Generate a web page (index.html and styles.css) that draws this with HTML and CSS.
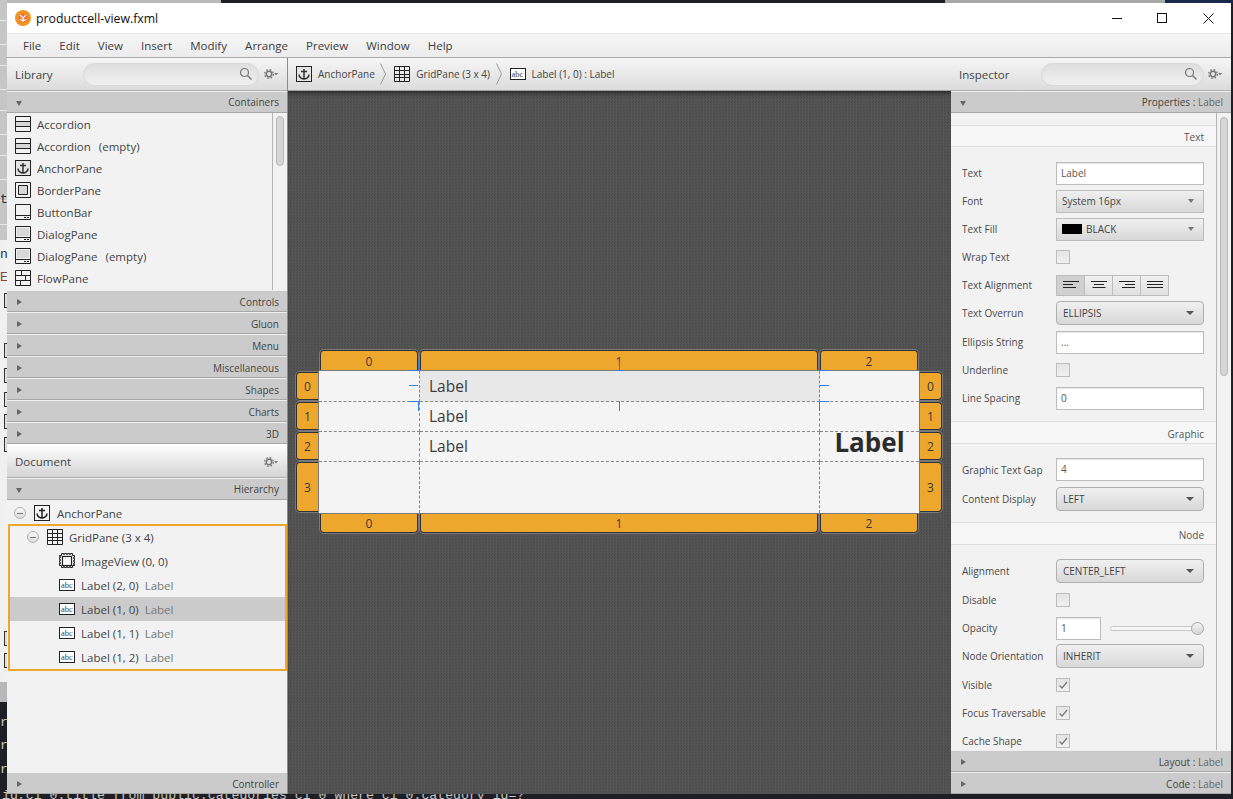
FILE: index.html
```html
<!DOCTYPE html>
<html lang="en">
<head>
<meta charset="utf-8">
<title>productcell-view.fxml</title>
<link rel="stylesheet" href="styles.css">
</head>
<body>
<svg class="sprite" aria-hidden="true">
  <defs>
    <symbol id="i-accordion" viewBox="0 0 16 16"><rect x=".5" y="5" width="15" height="6" fill="#d8d8d8"/><path d="M.5.5h15v15H.5zM.5 5.5h15M.5 10.5h15" fill="none" stroke="#222"/></symbol>
    <symbol id="i-anchor" viewBox="0 0 16 16"><rect x=".5" y=".5" width="15" height="15" fill="#e4e4e4" stroke="#222"/><path d="M8 3v10M5 5.5h6M3 8.5c0 3 3 4.500 5 4.500s5-1.500 5-4.500" fill="none" stroke="#333" stroke-width="1.500"/></symbol>
    <symbol id="i-anchor-w" viewBox="0 0 16 16"><rect x=".5" y=".5" width="15" height="15" fill="#f4f4f4" stroke="#222"/><path d="M8 3v10M5 5.500h6M3 8.500c0 3 3 4.500 5 4.500s5-1.500 5-4.500" fill="none" stroke="#222" stroke-width="1.500"/></symbol>
    <symbol id="i-border" viewBox="0 0 16 16"><rect x="4" y="4" width="8" height="8" fill="#d8d8d8"/><path d="M.5.5h15v15H.5zM3.500 3.500h9v9h-9z" fill="none" stroke="#222"/></symbol>
    <symbol id="i-bar" viewBox="0 0 16 16"><path d="M.5.5h15v15H.5zM.5 11.500h15" fill="none" stroke="#222"/><path d="M9 13.500h2M12 13.500h2" stroke="#222"/></symbol>
    <symbol id="i-dialog" viewBox="0 0 16 16"><rect x="2" y="2" width="12" height="8" fill="#d8d8d8"/><path d="M.5.5h15v15H.5zM.5 11.500h15" fill="none" stroke="#222"/><path d="M9 13.500h2M12 13.500h2" stroke="#222"/></symbol>
    <symbol id="i-flow" viewBox="0 0 16 16"><path d="M.5.5h15v15H.5zM.5 5.500h15M.5 10.500h15M6.500.5v5M10.500 5.500v5M5.500 10.500v5" fill="none" stroke="#222"/></symbol>
    <symbol id="i-grid" viewBox="0 0 16 16"><path d="M.5.5h15v15H.5zM.5 4.500h15M.5 8.500h15M.5 11.500h15M5.500.5v15M10.500.5v15" fill="none" stroke="#222"/></symbol>
    <symbol id="i-image" viewBox="0 0 16 16"><rect x="3.500" y="3.500" width="9" height="9" fill="#fff" stroke="#222" stroke-width="1.200"/><path d="M.5 2.500h2v-2h2v1h1v-1h2v1h1v-1h2v1h1v-1h2v2h2v2h-1v1h1v2h-1v1h1v2h-1v1h1v1h-2v2h-2v-1h-1v1h-2v-1h-1v1h-2v-1h-1v1h-2v-2h-2v-2h1v-1h-1v-2h1v-1h-1v-2h1v-1h-1z" fill="none" stroke="#222"/></symbol>
    <symbol id="i-search" viewBox="0 0 14 14"><circle cx="5.500" cy="5.500" r="4" fill="none" stroke="#777" stroke-width="1.200"/><path d="M8.500 8.500l4 4" stroke="#777" stroke-width="1.400"/></symbol>
    <symbol id="i-gear" viewBox="0 0 14 10"><circle cx="5" cy="5" r="2.700" fill="none" stroke="#777" stroke-width="1.500"/><circle cx="5" cy="5" r="4.300" fill="none" stroke="#777" stroke-width="1.300" stroke-dasharray="1.700 1.700"/><path d="M10 4h4l-2 2.500z" fill="#777"/></symbol>
    <symbol id="i-check" viewBox="0 0 14 14"><path d="M3.500 7.500l2.500 2.500 5-6" fill="none" stroke="#777" stroke-width="1.200"/></symbol>
    <symbol id="i-left" viewBox="0 0 16 8"><path d="M0 .5h16M0 3.500h10M0 6.500h13" stroke="#222" fill="none"/></symbol>
    <symbol id="i-center" viewBox="0 0 16 8"><path d="M0 .5h16M3 3.500h10M1.500 6.500h13" stroke="#222" fill="none"/></symbol>
    <symbol id="i-right" viewBox="0 0 16 8"><path d="M0 .5h16M6 3.500h10M3 6.500h13" stroke="#222" fill="none"/></symbol>
    <symbol id="i-just" viewBox="0 0 16 8"><path d="M0 .5h16M0 3.500h16M0 6.500h16" stroke="#222" fill="none"/></symbol>
  </defs>
</svg>

<div class="backdrop" aria-hidden="true">
  <div class="bd bd-top1"></div><div class="bd bd-top2"></div><div class="bd bd-top3"></div>
  <div class="bd bd-left1"></div><div class="bd bd-left2"></div><div class="bd bd-left3"></div>
  <i class="bd frag f1"></i><i class="bd frag f2"></i><i class="bd frag f3"></i><i class="bd frag f4"></i>
  <i class="bd frag f5"></i><i class="bd frag f6"></i><i class="bd frag f7"></i><i class="bd frag f8"></i>
  <span class="bd bd-g1">t</span><span class="bd bd-g2">n</span><span class="bd bd-g3">E</span>
  <span class="bd bd-r1">r</span><span class="bd bd-r2">r</span><span class="bd bd-r3">r</span>
  <div class="bd bd-sql">id,ci_0.title from public.categories ci_0 where ci_0.category_id=?</div>
</div>

<div class="window">
  <header class="titlebar">
    <svg class="logo" viewBox="0 0 16 16"><circle cx="8" cy="8" r="8" fill="#f0961e"/><circle cx="8" cy="8" r="4.500" fill="#ef6a3a"/><path d="M5 5l3 3 3-3M8 8v4M5 9a3.500 3.500 0 0 0 6 0" fill="none" stroke="#fff" stroke-width="1.200"/></svg>
    <span class="doc-title">productcell-view.fxml</span>
    <div class="win-controls">
      <span class="wc wc-min"></span>
      <span class="wc wc-max"></span>
      <svg class="wc-close" viewBox="0 0 11 11"><path d="M.5.5l10 10M10.500.5l-10 10" stroke="#111" fill="none"/></svg>
    </div>
  </header>
  <nav class="menubar">
    <span>File</span><span>Edit</span><span>View</span><span>Insert</span><span>Modify</span><span>Arrange</span><span>Preview</span><span>Window</span><span>Help</span>
  </nav>
  <div class="main">
    <aside class="left">
      <div class="panel-head">
        <span class="panel-name">Library</span>
        <div class="pill pill-lib"><svg class="ic-search"><use href="#i-search"/></svg></div>
        <svg class="ic-gear"><use href="#i-gear"/></svg>
      </div>
      <div class="bar open"><i class="tri"></i><span>Containers</span></div>
      <div class="lib-list">
        <ul class="lib-items">
          <li><svg class="ic"><use href="#i-accordion"/></svg>Accordion</li>
          <li><svg class="ic"><use href="#i-accordion"/></svg>Accordion&nbsp; (empty)</li>
          <li><svg class="ic"><use href="#i-anchor"/></svg>AnchorPane</li>
          <li><svg class="ic"><use href="#i-border"/></svg>BorderPane</li>
          <li><svg class="ic"><use href="#i-bar"/></svg>ButtonBar</li>
          <li><svg class="ic"><use href="#i-dialog"/></svg>DialogPane</li>
          <li><svg class="ic"><use href="#i-dialog"/></svg>DialogPane&nbsp; (empty)</li>
          <li><svg class="ic"><use href="#i-flow"/></svg>FlowPane</li>
        </ul>
        <div class="scroll scroll-lib"><div class="thumb thumb-lib"></div></div>
      </div>
      <div class="bar"><i class="tri"></i><span>Controls</span></div>
      <div class="bar"><i class="tri"></i><span>Gluon</span></div>
      <div class="bar"><i class="tri"></i><span>Menu</span></div>
      <div class="bar"><i class="tri"></i><span>Miscellaneous</span></div>
      <div class="bar"><i class="tri"></i><span>Shapes</span></div>
      <div class="bar"><i class="tri"></i><span>Charts</span></div>
      <div class="bar"><i class="tri"></i><span>3D</span></div>
      <div class="panel-head doc-head">
        <span class="panel-name">Document</span>
        <svg class="ic-gear"><use href="#i-gear"/></svg>
      </div>
      <div class="bar open"><i class="tri"></i><span>Hierarchy</span></div>
      <div class="tree">
        <div class="node lv0"><i class="minus"></i><svg class="ic"><use href="#i-anchor-w"/></svg><span>AnchorPane</span></div>
        <div class="tree-box">
          <div class="node lv1"><i class="minus"></i><svg class="ic"><use href="#i-grid"/></svg><span>GridPane (3 x 4)</span></div>
          <div class="node lv2"><svg class="ic"><use href="#i-image"/></svg><span>ImageView (0, 0)</span></div>
          <div class="node lv2"><span class="abc">abc</span><span>Label (2, 0)</span><em>Label</em></div>
          <div class="node lv2 selected"><span class="abc">abc</span><span>Label (1, 0)</span><em>Label</em></div>
          <div class="node lv2"><span class="abc">abc</span><span>Label (1, 1)</span><em>Label</em></div>
          <div class="node lv2"><span class="abc">abc</span><span>Label (1, 2)</span><em>Label</em></div>
        </div>
      </div>
      <div class="bar"><i class="tri"></i><span>Controller</span></div>
    </aside>

    <section class="center">
      <div class="crumbs">
        <svg class="ic"><use href="#i-anchor"/></svg><span>AnchorPane</span>
        <svg class="chev" viewBox="0 0 6 22"><path d="M.5.5l5 10.500-5 10.500" fill="none" stroke="#999"/></svg>
        <svg class="ic"><use href="#i-grid"/></svg><span>GridPane (3 x 4)</span>
        <svg class="chev" viewBox="0 0 6 22"><path d="M.5.5l5 10.500-5 10.500" fill="none" stroke="#999"/></svg>
        <span class="abc">abc</span><span>Label (1, 0) : Label</span>
      </div>
      <div class="canvas">
        <div class="designer">
          <div class="rt c1">0</div><div class="rt c2">1</div><div class="rt c3">2</div>
          <div class="rl r1">0</div><div class="rl r2">1</div><div class="rl r3">2</div><div class="rl r4">3</div>
          <div class="rr r1">0</div><div class="rr r2">1</div><div class="rr r3">2</div><div class="rr r4">3</div>
          <div class="rb c1">0</div><div class="rb c2">1</div><div class="rb c3">2</div>

          <div class="cell c1 r1"></div><div class="cell c2 r1 sel"><span>Label</span></div><div class="cell c3 r1"></div>
          <div class="cell c1 r2"></div><div class="cell c2 r2"><span>Label</span></div><div class="cell c3 r2"></div>
          <div class="cell c1 r3"></div><div class="cell c2 r3"><span>Label</span></div><div class="cell c3 r3"></div>
          <div class="cell c1 r4"></div><div class="cell c2 r4"></div><div class="cell c3 r4"></div>
          <div class="big-label">Label</div>

          <i class="h hh h1"></i><i class="h hv h2"></i><i class="h hh h3"></i><i class="h hh h4"></i><i class="h hv h5"></i>
          <i class="h hh h6"></i><i class="h hv h7"></i><i class="h hh h9"></i><i class="h hv h10"></i>
          <i class="h hv h11"></i><i class="h hh h12"></i><i class="h hh h13"></i><i class="h hv h14"></i>
        </div>
      </div>
    </section>

    <aside class="right">
      <div class="panel-head">
        <span class="panel-name">Inspector</span>
        <div class="pill pill-ins"><svg class="ic-search"><use href="#i-search"/></svg></div>
        <svg class="ic-gear"><use href="#i-gear"/></svg>
      </div>
      <div class="bar open"><i class="tri"></i><span>Properties : <b>Label</b></span></div>
      <div class="props">
        <div class="props-body">
          <div class="sec-title sec-title-first">Text</div>
          <div class="sec sec-text">
            <div class="row"><label>Text</label><div class="field">Label</div></div>
            <div class="row"><label>Font</label><div class="combo flat"><span>System 16px</span><i class="arrow small"></i></div></div>
            <div class="row"><label>Text Fill</label><div class="combo flat"><i class="swatch"></i><span class="fill-name">BLACK</span><i class="arrow small"></i></div></div>
            <div class="row"><label>Wrap Text</label><i class="check"></i></div>
            <div class="row"><label>Text Alignment</label>
              <div class="toggles">
                <span class="on"><svg><use href="#i-left"/></svg></span><span><svg><use href="#i-center"/></svg></span><span><svg><use href="#i-right"/></svg></span><span><svg><use href="#i-just"/></svg></span>
              </div>
            </div>
            <div class="row"><label>Text Overrun</label><div class="combo"><span>ELLIPSIS</span><i class="arrow"></i></div></div>
            <div class="row row-m"><label>Ellipsis String</label><div class="field">...</div></div>
            <div class="row"><label>Underline</label><i class="check"></i></div>
            <div class="row"><label>Line Spacing</label><div class="field">0</div></div>
          </div>
          <div class="sec-title">Graphic</div>
          <div class="sec sec-graphic">
            <div class="row row-l"><label>Graphic Text Gap</label><div class="field">4</div></div>
            <div class="row row-m"><label>Content Display</label><div class="combo"><span>LEFT</span><i class="arrow"></i></div></div>
          </div>
          <div class="sec-title">Node</div>
          <div class="sec">
            <div class="row"><label>Alignment</label><div class="combo"><span>CENTER_LEFT</span><i class="arrow"></i></div></div>
            <div class="row row-m"><label>Disable</label><i class="check"></i></div>
            <div class="row"><label>Opacity</label><div class="field field-s">1</div><div class="slider"><i class="knob"></i></div></div>
            <div class="row"><label>Node Orientation</label><div class="combo"><span>INHERIT</span><i class="arrow"></i></div></div>
            <div class="row row-l"><label>Visible</label><i class="check"><svg><use href="#i-check"/></svg></i></div>
            <div class="row"><label>Focus Traversable</label><i class="check"><svg><use href="#i-check"/></svg></i></div>
            <div class="row"><label>Cache Shape</label><i class="check"><svg><use href="#i-check"/></svg></i></div>
          </div>
        </div>
        <div class="scroll scroll-ins"><div class="thumb thumb-ins"></div></div>
      </div>
      <div class="bar"><i class="tri"></i><span>Layout : <b>Label</b></span></div>
      <div class="bar"><i class="tri"></i><span>Code : <b>Label</b></span></div>
    </aside>
  </div>
</div>
</body>
</html>
```
FILE: styles.css
```css
* { box-sizing: border-box; }
html, body { height: 100%; }
body {
  margin: 0;
  padding: 3px 0 0 7px;
  width: 1233px;
  height: 799px;
  overflow: hidden;
  position: relative;
  background: #1d1f24;
  font-family: "Open Sans", "Noto Sans", sans-serif;
  font-size: 11.5px;
  color: #444;
}
.sprite { position: absolute; width: 0; height: 0; }

/* desktop behind the window */
.backdrop { position: absolute; inset: 0; overflow: hidden; }
.bd { position: absolute; }
.bd-top1 { left: 0; top: 0; width: 221px; height: 3px; background: #b9b9b9; }
.bd-top2 { left: 945px; top: 0; width: 220px; height: 3px; background: #a8a8a8; }
.bd-top3 { left: 1165px; top: 0; width: 68px; height: 3px; background: #1b2a4a; }
.bd-left1 {
  left: 0; top: 0; width: 7px; height: 240px;
  background: repeating-linear-gradient(#c6c6c6 0 20px, #e8e8e8 20px 21px, #c6c6c6 21px 44px, #e8e8e8 44px 45px);
}
.bd-left2 { left: 0; top: 240px; width: 7px; height: 442px; background: #f0f0f0; }
.bd-left3 { left: 0; top: 682px; width: 7px; height: 20px; background: #b8b8b8; }
.frag { left: 4px; width: 8px; height: 15px; border: 1px solid #333; background: #ddd; }
.f1 { top: 293px; }
.f2 { top: 343px; }
.f3 { top: 368px; }
.f4 { top: 392px; }
.f5 { top: 414px; }
.f6 { top: 437px; }
.f7 { top: 631px; }
.f8 { top: 653px; }
.bd-g1, .bd-g2, .bd-g3, .bd-r1, .bd-r2, .bd-r3 { font-family: "Liberation Mono", monospace; font-size: 13px; line-height: 14px; left: 0; }
.bd-g1 { top: 193px; color: #234; }
.bd-g2 { top: 248px; color: #234; }
.bd-g3 { top: 271px; color: #843; }
.bd-r1, .bd-r2, .bd-r3 { color: #c8c8c8; }
.bd-r1 { top: 716px; }
.bd-r2 { top: 739px; }
.bd-r3 { top: 763px; }
.bd-sql { left: 2px; top: 788px; font-family: "Liberation Mono", monospace; font-size: 13.200px; line-height: 16px; color: #c8c8c8; white-space: pre; }

/* window */
.window {
  position: relative;
  width: 1224px;
  height: 791px;
  display: flex;
  flex-direction: column;
  background: #f2f2f2;
}
.titlebar { height: 30px; background: #fff; display: flex; align-items: center; padding-left: 8px; flex: none; }
.logo { width: 16px; height: 16px; margin-right: 5px; }
.doc-title { font-size: 12.300px; color: #111; }
.win-controls { margin-left: auto; display: flex; align-items: center; width: 119px; height: 30px; }
.wc-min { display: block; width: 10px; height: 1px; background: #111; margin-right: 35px; }
.wc-max { display: block; width: 10px; height: 10px; border: 1px solid #111; margin-right: 36px; }
.wc-close { width: 11px; height: 11px; }
.menubar {
  height: 25px; flex: none;
  display: flex; align-items: center; gap: 18.100px;
  padding: 0 0 1px 16px;
  background: linear-gradient(#f6f6f6, #ececec);
  border-top: 1px solid #e8e8e8;
  border-bottom: 1px solid #a9a9a9;
  color: #3c3c3c;
}
.main { flex: 1; min-height: 0; display: grid; grid-template-columns: 281px 663px 280px; }

/* side panels */
.left, .right { display: flex; flex-direction: column; min-height: 0; background: #f2f2f2; }
.left { border-right: 1px solid #8c8c8c; }
.panel-head {
  height: 33px; flex: none;
  display: flex; align-items: center;
  padding: 0 9px 0 8px;
  background: linear-gradient(#f6f6f6, #dcdcdc);
  border-bottom: 1px solid #b0b0b0;
}
.doc-head { height: 34px; padding-top: 2px; background: linear-gradient(#fff, #d4d4d4); justify-content: space-between; }
.panel-name { font-size: 11.500px; color: #444; }
.pill {
  height: 23px; border: 1px solid #d8d8d8; border-radius: 12px;
  background: linear-gradient(#dedede, #f0f0f0);
  display: flex; align-items: center; justify-content: flex-end; padding-right: 5px;
}
.pill-lib { width: 176px; margin-left: 30px; }
.pill-ins { width: 163px; margin-left: 32px; }
.ic-search { width: 14px; height: 14px; }
.ic-gear { width: 14px; height: 10px; margin-left: auto; }

.bar {
  height: 22px; flex: none;
  display: flex; align-items: center; justify-content: space-between;
  padding: 2px 8px 0 9px;
  background: #cbcbcb;
  border-top: 1px solid #efefef;
  border-bottom: 1px solid #a8a8a8;
  color: #444;
  font-size: 10px;
}
.bar.open { padding-top: 0; }
.bar b { font-weight: 400; color: #666; }
.tri { width: 0; height: 0; margin-left: 1px; border-style: solid; border-width: 3px 0 3px 5px; border-color: transparent transparent transparent #666; }
.open .tri { margin-left: 0; margin-top: 2px; border-width: 5px 3px 0 3px; border-color: #666 transparent transparent transparent; }

.lib-list { height: 177px; flex: none; display: flex; overflow: hidden; }
.lib-items { list-style: none; margin: 0; padding: 0 0 0 8px; flex: 1; }
.lib-items li { height: 22px; display: flex; align-items: center; gap: 6px; word-spacing: 1px; }
.ic { width: 16px; height: 16px; flex: none; }
.scroll { flex: none; border-left: 1px solid #b4b4b4; background: #f2f2f2; position: relative; }
.scroll-lib { width: 15px; }
.thumb { background: #d6d6d6; border: 1px solid #b8b8b8; border-radius: 4px; }
.thumb-lib { width: 8px; height: 50px; margin: 3px 0 0 3px; }

/* hierarchy */
.tree { flex: 1; min-height: 0; }
.node { height: 24px; display: flex; align-items: center; position: relative; }
.node em { font-style: normal; color: #777; margin-left: 6px; }
.lv0 { padding-left: 7px; top: 1px; }
.lv0 .minus { margin-right: 8px; }
.lv0 .ic { margin-right: 7px; }
.tree-box { border: 2px solid #eea72d; width: 279px; margin-left: 1px; height: 147px; padding: 0; }
.tree-box .node:first-child { margin-top: -1px; }
.lv1 { padding-left: 17px; }
.lv1 .minus { margin-right: 8px; }
.lv1 .ic { margin-right: 6px; }
.lv2 { padding-left: 49px; }
.lv2 .ic, .lv2 .abc { margin-right: 6px; }
.selected { background: #cbcbcb; }
.minus { width: 12px; height: 12px; border: 1px solid #b0b0b0; border-radius: 50%; background: linear-gradient(#fafafa, #dcdcdc); display: flex; align-items: center; justify-content: center; flex: none; }
.minus::before { content: ""; width: 6px; height: 1px; background: #777; }
.abc {
  width: 16px; height: 12px; flex: none;
  border: 1px solid #222; background: #fff;
  font-family: "Liberation Serif", serif; font-size: 8.500px; line-height: 10px; text-align: center; color: #444;
}

/* center */
.center { display: flex; flex-direction: column; min-height: 0; }
.crumbs {
  height: 33px; flex: none;
  display: flex; align-items: center;
  padding-left: 8px;
  font-size: 10px;
  background: linear-gradient(#f6f6f6, #dcdcdc);
  border-bottom: 1px solid #a0a0a0;
}
.crumbs span:not(.abc) { margin-left: 6px; }
.chev { width: 6px; height: 22px; margin: 0 8px 0 5.500px; flex: none; }
.canvas {
  flex: 1; min-height: 0;
  display: flex; align-items: center; justify-content: center;
  background-color: #505050;
  background-image: conic-gradient(#555 25%, #4d4d4d 0 50%, #555 0 75%, #4d4d4d 0);
  background-size: 3px 3px;
  box-shadow: inset 0 5px 5px -3px rgba(0, 0, 0, .5);
  padding: 0 1px 1px 0;
}
.designer {
  position: relative;
  display: grid;
  grid-template-columns: 23px 101px 400px 99px 23px;
  grid-template-rows: 21px 31px 30px 30px 51px 21px;
  font-size: 12px;
}
.c1 { grid-column: 2; }
.c2 { grid-column: 3; }
.c3 { grid-column: 4; }
.r1 { grid-row: 2; }
.r2 { grid-row: 3; }
.r3 { grid-row: 4; }
.r4 { grid-row: 5; }
.rt, .rb, .rl, .rr {
  background: #eea72d; color: #3a3a3a;
  border: 1px solid #2f3136;
  box-shadow: 0 0 0 1px #7a7a7a;
  display: flex; align-items: center; justify-content: center;
}
.rt { grid-row: 1; margin: 0 2px 1px 0; border-radius: 4px 4px 0 0; padding-top: 2px; border-bottom: 0; }
.rb { grid-row: 6; margin: 1px 2px 1px 0; border-radius: 0 0 4px 4px; border-top: 0; }
.rt.c1, .rb.c1 { margin-left: 1px; }
.rt.c3, .rb.c3 { margin-right: 1px; }
.rl { grid-column: 1; margin: 0 1px 2px 0; border-radius: 4px 0 0 4px; border-right: 0; }
.rr { grid-column: 5; margin: 0 0 2px 1px; border-radius: 0 4px 4px 0; border-left: 0; }
.rl.r1, .rr.r1 { margin-top: 1px; }
.rl.r4, .rr.r4 { margin-bottom: 1px; }
.cell {
  background: #f4f4f4;
  border-right: 1px dashed #888;
  border-bottom: 1px dashed #888;
  display: flex; align-items: center;
  padding-left: 9px;
  font-size: 15.500px; color: #3c3c3c;
}
.cell.r2, .cell.r3 { padding-bottom: 2px; }
.cell.c3 { border-right: 0; }
.cell.r4 { border-bottom: 0; }
.cell.sel { background: #e8e8e8; }
.big-label {
  grid-column: 4; grid-row: 2 / 6;
  align-self: center; justify-self: center;
  font-size: 26px; font-weight: 700; line-height: 34px; color: #2c2c2c;
  position: relative;
}
.h { position: absolute; background: #2f80ed; }
.hh { height: 1px; width: 9px; }
.hv { width: 1px; height: 10px; }
.h1 { left: 113px; top: 20px; }
.h2 { left: 122px; top: 11px; }
.h3 { left: 113px; top: 35px; }
.h4 { left: 113px; top: 51px; }
.h5 { left: 122px; top: 51px; }
.h6 { left: 320px; top: 20px; width: 7px; }
.h7 { left: 323px; top: 11px; }
.h9 { left: 524px; top: 20px; }
.h10 { left: 523px; top: 11px; }
.h11 { left: 323px; top: 51px; }
.h12 { left: 524px; top: 35px; }
.h13 { left: 524px; top: 51px; }
.h14 { left: 523px; top: 51px; }

/* inspector */
.props { flex: 1; min-height: 0; display: flex; overflow: hidden; }
.props-body { width: 265px; flex: none; padding-top: 12px; height: 100%; overflow: hidden; font-size: 10px; }
.scroll-ins { flex: 1; }
.thumb-ins { width: 8px; height: 259px; margin: 4px 0 0 3px; }
.sec-title {
  height: 23px;
  display: flex; align-items: center; justify-content: flex-end;
  padding: 2px 12px 0 0;
  background: #f6f6f6;
  border-top: 1px solid #dedede;
  border-bottom: 1px solid #dedede;
  color: #555;
}
.sec-title-first { height: 22px; padding-top: 1px; }
.sec { padding: 12px 12px 9px 11px; }
.sec-graphic { padding-top: 11px; }
.row { height: 28px; display: flex; align-items: center; }
.row-l { height: 29px; }
.row-m { margin-top: 1px; }
.row label { width: 94px; flex: none; white-space: nowrap; color: #4a4a4a; }
.field {
  width: 148px; height: 23px;
  background: #fff; border: 1px solid #bcbcbc;
  box-shadow: inset 0 1px 1px #e6e6e6;
  padding-left: 4px; line-height: 20px; color: #555;
}
.field-s { width: 45px; }
.combo {
  width: 148px; height: 24px;
  display: flex; align-items: center;
  padding: 0 8px 0 6px;
  background: linear-gradient(#f0f0f0, #d8d8d8);
  border: 1px solid #b0b0b0; border-radius: 4px;
  color: #444;
}
.combo.flat { border-radius: 0; border-color: #bcbcbc; height: 23px; padding-left: 5px; }
.swatch { width: 20px; height: 10px; background: #000; margin-right: 4px; flex: none; }
.arrow { margin-left: auto; width: 0; height: 0; border-style: solid; border-width: 4px 4px 0 4px; border-color: #555 transparent transparent transparent; margin-right: 1px; }
.arrow.small { border-width: 4px 3px 0 3px; border-color: #777 transparent transparent transparent; }
.check { width: 14px; height: 14px; border: 1px solid #bcbcbc; background: linear-gradient(#e4e4e4, #f0f0f0); display: block; flex: none; }
.check svg { width: 14px; height: 14px; display: block; margin: -1px; }
.toggles { display: flex; }
.toggles span {
  width: 29px; height: 21px; display: flex; align-items: center; justify-content: center;
  background: linear-gradient(#f0f0f0, #e0e0e0);
  border: 1px solid #bcbcbc; margin-left: -1px;
}
.toggles span:first-child { margin-left: 0; }
.toggles .on { background: #d0d0d0; }
.toggles svg { width: 16px; height: 8px; }
.slider {
  width: 94px; height: 5px; margin-left: 9px;
  border: 1px solid #c8c8c8; border-radius: 3px;
  background: #f6f6f6; position: relative;
}
.knob {
  position: absolute; right: -1px; top: -5px;
  width: 13px; height: 13px; border-radius: 50%;
  border: 1px solid #a8a8a8; background: linear-gradient(#f4f4f4, #d4d4d4);
}
```
